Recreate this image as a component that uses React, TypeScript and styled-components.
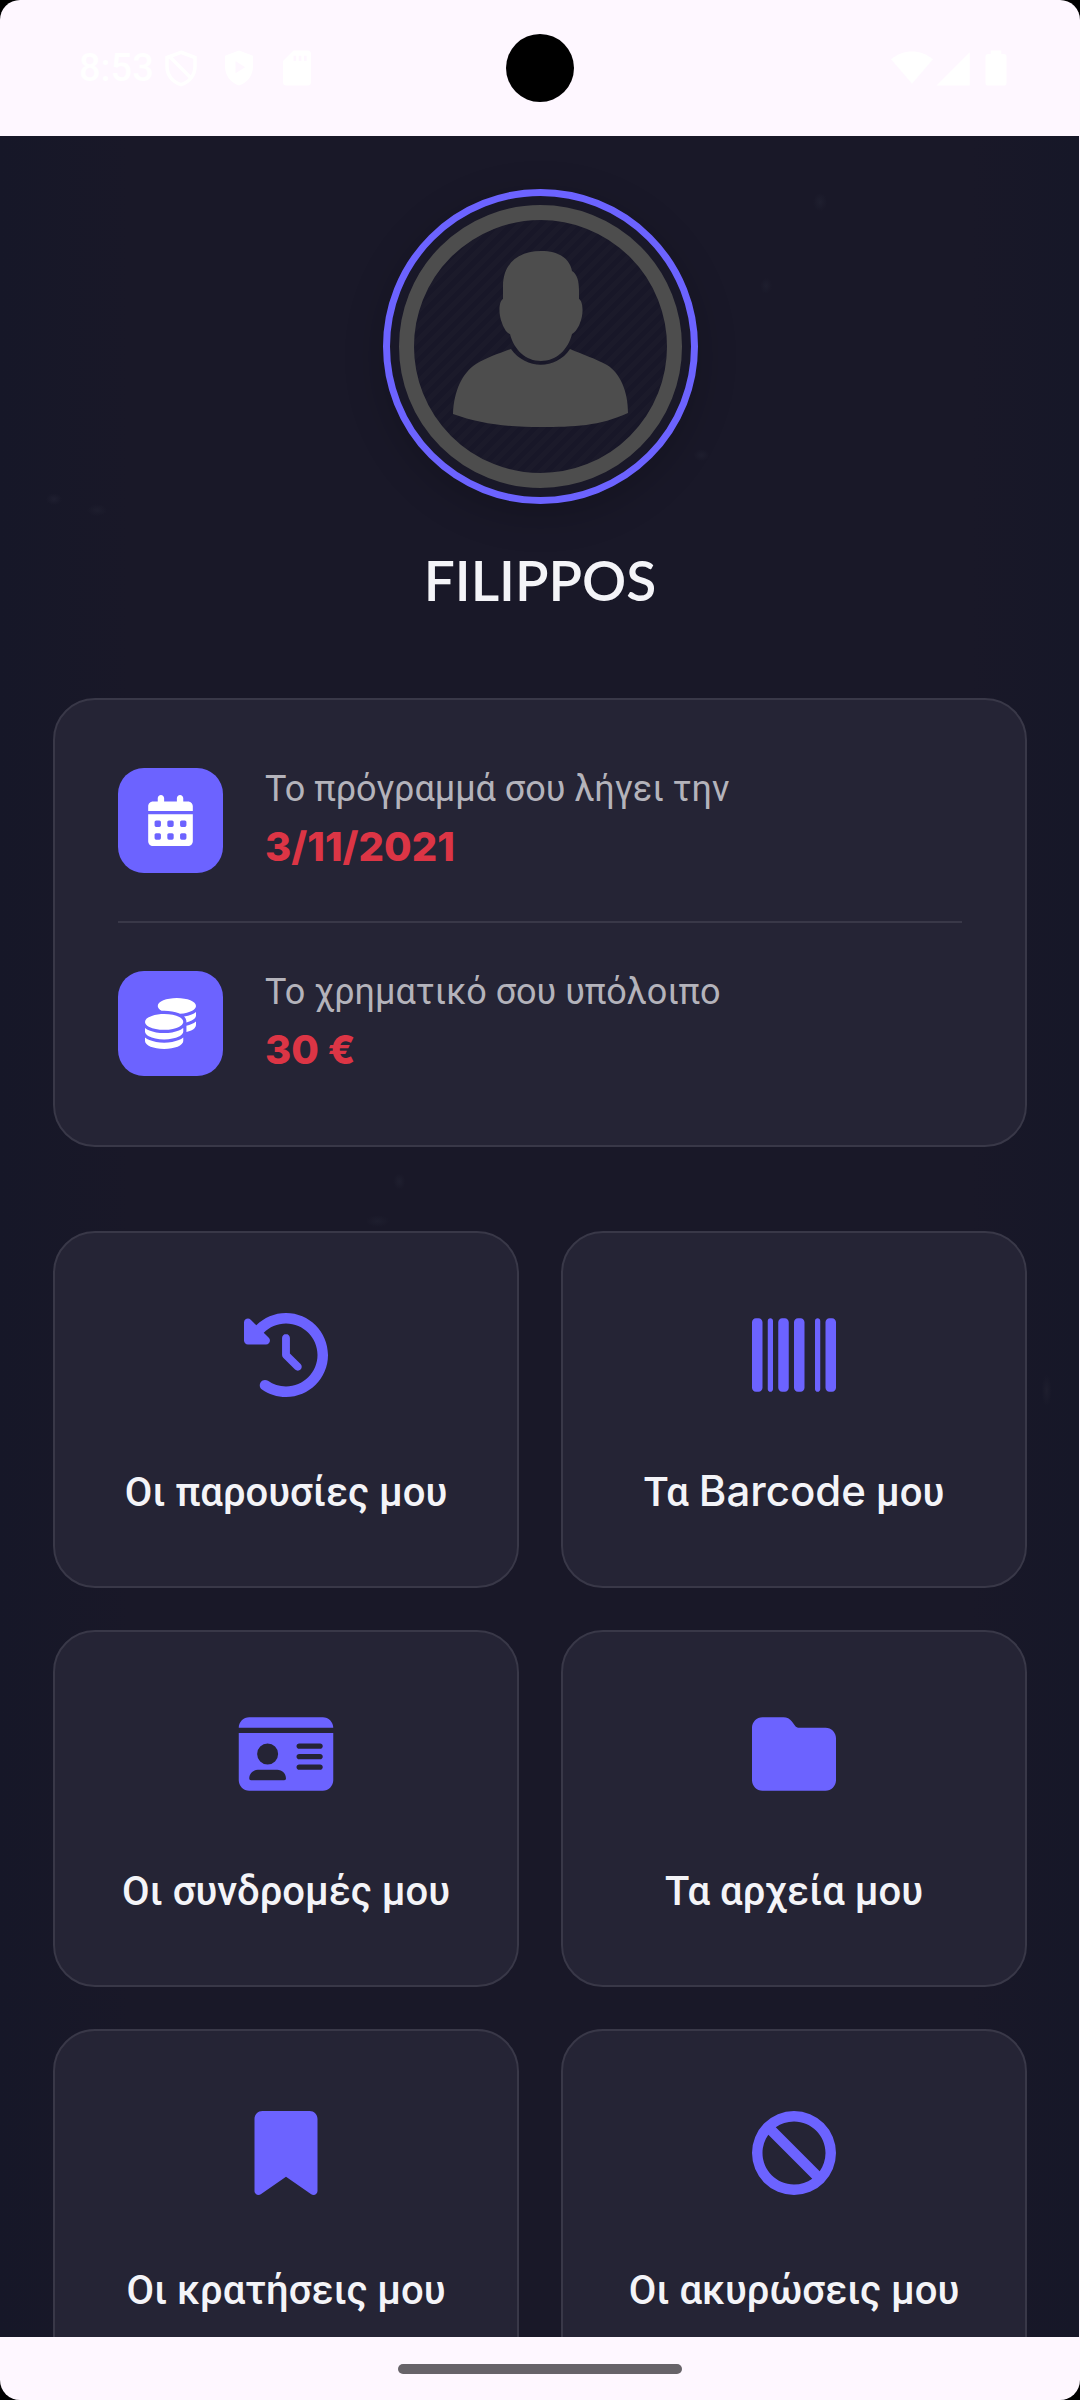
import React from "react";
import styled, { createGlobalStyle } from "styled-components";
import type { IconType } from "react-icons";
import {
  FaBan,
  FaBarcode,
  FaBookmark,
  FaCalendarDays,
  FaClockRotateLeft,
  FaCoins,
  FaFolder,
  FaIdCard,
} from "react-icons/fa6";

const color = {
  chrome: "#fef7ff",
  page: "#191828",
  card: "#252435",
  line: "#393848",
  accent: "#6c63ff",
  danger: "#dc3545",
  text: "#f4f4f8",
  muted: "#b4b3bb",
  portrait: "#4d4d4d",
};

const GlobalStyle = createGlobalStyle`
  * { box-sizing: border-box; }
  body {
    margin: 0;
    background: #000;
    font-family: Roboto, "Noto Sans", sans-serif;
  }
`;

const Screen = styled.div`
  height: 100vh;
  display: flex;
  flex-direction: column;
  overflow: hidden;
  border-radius: 20px;
  background: ${color.chrome};
`;

const StatusBar = styled.header`
  flex: none;
  height: 136px;
  padding: 0 63px;
  display: grid;
  grid-template-columns: 1fr auto 1fr;
  align-items: center;
  color: #fff;
`;

const StatusSide = styled.div`
  display: flex;
  align-items: center;
  gap: 6px;
  padding-left: 16px;
`;

const GlyphGroup = styled.div<{ $end?: boolean }>`
  display: flex;
  align-items: center;
  gap: ${(p) => (p.$end ? "0" : "16px")};
  justify-content: ${(p) => (p.$end ? "flex-end" : "flex-start")};
`;

const Time = styled.time`
  font-size: 38px;
  font-weight: 500;
  line-height: 44px;
`;

const Camera = styled.div`
  width: 68px;
  height: 68px;
  border-radius: 50%;
  background: #000;
`;

const StatusGlyph = styled.svg`
  width: 42px;
  height: 42px;
  fill: currentColor;
`;

const Content = styled.main`
  flex: 1;
  min-height: 0;
  margin-right: 1px;
  padding: 53px 52px 42px 53px;
  overflow-y: auto;
  scrollbar-width: none;
  background:
    radial-gradient(ellipse 8px 6px at 5% 16.5%, #1f1f30, transparent),
    radial-gradient(ellipse 10px 6px at 9% 17%, #1e1e2e, transparent),
    radial-gradient(ellipse 7px 9px at 76% 3%, #1f1f2f, transparent),
    radial-gradient(ellipse 8px 6px at 65% 14.5%, #1f1f2f, transparent),
    radial-gradient(ellipse 6px 8px at 71% 6.8%, #1e1e2e, transparent),
    radial-gradient(ellipse 6px 8px at 37% 47.5%, #1f1f2f, transparent),
    radial-gradient(ellipse 12px 6px at 35% 49.3%, #1e1e2e, transparent),
    radial-gradient(ellipse 5px 16px at 97% 57%, #1e1e2e, transparent),
    linear-gradient(90deg, #161728, ${color.page} 12%, ${color.page} 90%, #161728);
`;

const Profile = styled.section`
  display: flex;
  flex-direction: column;
  align-items: center;
  gap: 42px;
`;

const Avatar = styled.div`
  width: 315px;
  height: 315px;
  padding: 9px;
  border: 7px solid ${color.accent};
  border-radius: 50%;
  box-shadow: 0 10px 40px rgba(0, 0, 0, 0.2);
`;

const AvatarDisc = styled.div`
  height: 100%;
  border: 15px solid ${color.portrait};
  border-radius: 50%;
  background: repeating-linear-gradient(135deg, #181728 0 5px, #1b1a2a 5px 10px);
`;

const Portrait = styled.svg`
  display: block;
  width: 100%;
  height: 100%;
  fill: ${color.portrait};
`;

const Name = styled.h1`
  margin: 0;
  font-family: Lato, sans-serif;
  font-size: 55px;
  font-weight: 600;
  line-height: 68px;
  color: ${color.text};
`;

const InfoCard = styled.section`
  margin-top: 84px;
  padding: 20px 63px 21px;
  border: 2px solid ${color.line};
  border-radius: 42px;
  background: ${color.card};
`;

const InfoRow = styled.div`
  display: flex;
  align-items: center;
  gap: 42px;
  padding: 48px 0;

  & + & {
    border-top: 2px solid ${color.line};
  }
`;

const InfoBadge = styled.div`
  flex: none;
  width: 105px;
  height: 105px;
  display: grid;
  place-items: center;
  border-radius: 26px;
  background: ${color.accent};
  color: #fff;
  font-size: 51px;
`;

const InfoText = styled.div`
  display: flex;
  flex-direction: column;
  height: 105px;
`;

const InfoLabel = styled.span`
  font-size: 36px;
  line-height: 42px;
  color: ${color.muted};
`;

const InfoValue = styled.strong`
  font-family: Inter, sans-serif;
  font-size: 40px;
  font-weight: 800;
  line-height: 74px;
  color: ${color.danger};
`;

const TileGrid = styled.nav`
  margin-top: 84px;
  display: grid;
  grid-template-columns: 1fr 1fr;
  gap: 42px;
`;

const TileButton = styled.button`
  display: flex;
  flex-direction: column;
  align-items: center;
  gap: 72px;
  padding: 80px 24px 69px;
  border: 2px solid ${color.line};
  border-radius: 42px;
  background: ${color.card};
  color: ${color.accent};
  font-family: inherit;
`;

const TileIcon = styled.span`
  display: flex;

  svg {
    width: 96px;
    height: 84px;
  }
`;

const TileLabel = styled.span`
  font-size: 40px;
  font-weight: 500;
  line-height: 48px;
  color: ${color.text};
  white-space: nowrap;
`;

const Latin = styled.span`
  font-family: Inter, sans-serif;
  font-size: 42px;
  line-height: 40px;
`;

const NavBar = styled.footer`
  flex: none;
  height: 63px;
  display: grid;
  place-items: center;
`;

const Handle = styled.div`
  width: 284px;
  height: 10px;
  border-radius: 5px;
  background: #676369;
`;

interface Info {
  icon: IconType;
  label: string;
  value: string;
}

const infos: Info[] = [
  { icon: FaCalendarDays, label: "Το πρόγραμμά σου λήγει την", value: "3/11/2021" },
  { icon: FaCoins, label: "Το χρηματικό σου υπόλοιπο", value: "30 €" },
];

interface Tile {
  id: string;
  icon: IconType;
  label: React.ReactNode;
}

const tiles: Tile[] = [
  { id: "visits", icon: FaClockRotateLeft, label: "Οι παρουσίες μου" },
  { id: "barcode", icon: FaBarcode, label: <>Τα <Latin>Barcode</Latin> μου</> },
  { id: "plans", icon: FaIdCard, label: "Οι συνδρομές μου" },
  { id: "files", icon: FaFolder, label: "Τα αρχεία μου" },
  { id: "bookings", icon: FaBookmark, label: "Οι κρατήσεις μου" },
  { id: "cancellations", icon: FaBan, label: "Οι ακυρώσεις μου" },
];

function NotificationIcons() {
  return (
    <GlyphGroup>
      <StatusGlyph viewBox="0 0 24 24" aria-hidden="true">
        <path
          d="M12 3 20 6V11C20 16 17 20 12 21.500 7 20 4 16 4 11V6ZM5 5 18 18"
          fill="none"
          stroke="currentColor"
          strokeWidth="2"
        />
      </StatusGlyph>
      <StatusGlyph viewBox="0 0 24 24" aria-hidden="true">
        <path
          fillRule="evenodd"
          d="M12 2 20 5V11C20 16 17 20.500 12 22 7 20.500 4 16 4 11V5ZM10 8V15L15.500 11.500Z"
        />
      </StatusGlyph>
      <StatusGlyph viewBox="0 0 24 24" aria-hidden="true">
        <path
          fillRule="evenodd"
          d="M10 2H18Q20 2 20 4V20Q20 22 18 22H6Q4 22 4 20V8ZM10 5V8H11.500V5ZM13 5V8H14.500V5ZM16 5V8H17.500V5Z"
        />
      </StatusGlyph>
    </GlyphGroup>
  );
}

function DeviceIcons() {
  return (
    <GlyphGroup $end>
      <StatusGlyph viewBox="0 0 24 20" aria-hidden="true">
        <path d="M0 5C7-1 17-1 24 5L12 19Z" />
      </StatusGlyph>
      <StatusGlyph viewBox="0 0 24 24" aria-hidden="true">
        <path d="M2 22H21V3Z" />
      </StatusGlyph>
      <StatusGlyph viewBox="0 0 24 24" aria-hidden="true">
        <path d="M9 2h6v2h1.500Q18 4 18 5.500v15Q18 22 16.500 22h-9Q6 22 6 20.500v-15Q6 4 7.500 4H9Z" />
      </StatusGlyph>
    </GlyphGroup>
  );
}

export default function App() {
  return (
    <>
      <GlobalStyle />
      <Screen>
        <StatusBar>
          <StatusSide>
            <Time>8:53</Time>
            <NotificationIcons />
          </StatusSide>
          <Camera />
          <DeviceIcons />
        </StatusBar>

        <Content>
          <Profile>
            <Avatar>
              <AvatarDisc>
                <Portrait viewBox="0 0 253 253" role="img" aria-label="FILIPPOS">
                  <path d="M127 31C147 31 156 40 158 51C163 54 165 61 165 70V79C169 81 170 94 166 103C164 109 160 113 158 114C154 130 142 141 127 141C112 141 100 130 96 114C93 113 90 109 88 103C84 93 85 81 89 79V66C89 43 105 31 127 31Z" />
                  <path d="M97 129C112 150 142 150 156 129C168 134 182 139 193 145C206 153 214 171 214 193C186 206 160 207 127 207C94 207 66 204 39 194C40 171 48 153 62 144C72 138 86 133 97 129Z" />
                </Portrait>
              </AvatarDisc>
            </Avatar>
            <Name>FILIPPOS</Name>
          </Profile>

          <InfoCard>
            {infos.map(({ icon: Icon, label, value }) => (
              <InfoRow key={label}>
                <InfoBadge>
                  <Icon />
                </InfoBadge>
                <InfoText>
                  <InfoLabel>{label}</InfoLabel>
                  <InfoValue>{value}</InfoValue>
                </InfoText>
              </InfoRow>
            ))}
          </InfoCard>

          <TileGrid>
            {tiles.map(({ id, icon: Icon, label }) => (
              <TileButton key={id} type="button">
                <TileIcon>
                  <Icon />
                </TileIcon>
                <TileLabel>{label}</TileLabel>
              </TileButton>
            ))}
          </TileGrid>
        </Content>

        <NavBar>
          <Handle />
        </NavBar>
      </Screen>
    </>
  );
}
